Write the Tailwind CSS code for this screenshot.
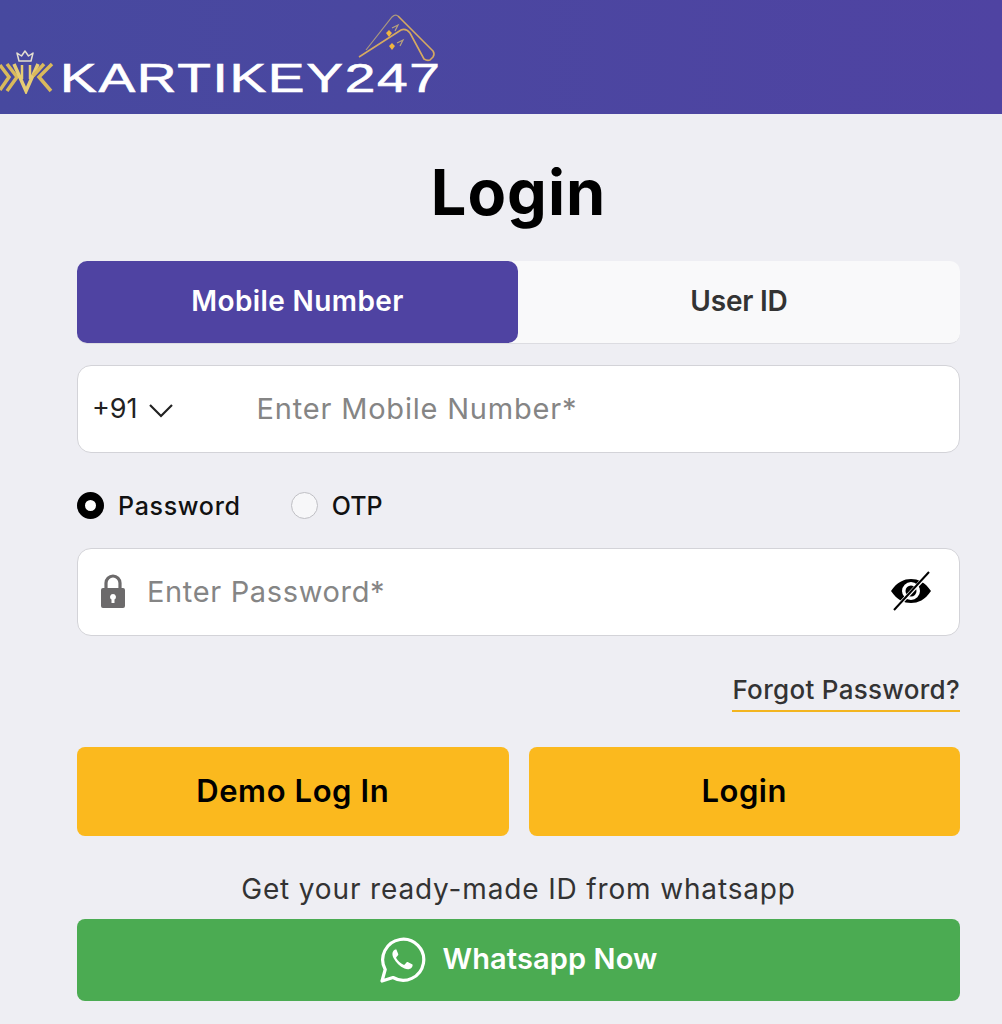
<!DOCTYPE html>
<html lang="en">
<head>
  <meta charset="UTF-8" />
  <meta name="viewport" content="width=device-width, initial-scale=1.0" />
  <title>Login - Kartikey247</title>
  <script src="https://cdn.jsdelivr.net/npm/@tailwindcss/browser@4"></script>
</head>
<body class="bg-[#eeeef3] text-black font-['Inter',sans-serif] overflow-hidden">
  <div class="h-[1024px] flex flex-col">
    <!-- header -->
    <header class="h-[114px] bg-gradient-to-r from-[#47499f] to-[#4f43a2] relative shrink-0">
      <svg class="absolute left-0 top-[50px]" width="56" height="44" viewBox="0 0 56 44" fill="none">
        <path d="M19 11l-2-8 4.500 3L25 1l3.500 5L33 3l-2 8z" stroke="#e4dfd0" stroke-width="1.500" stroke-linejoin="round"/>
        <path d="M0 15l9 12-9 13M7 14l10 13L7 41" stroke="#d9b95c" stroke-width="3.500"/>
        <path d="M14 14l12 27 12-27" stroke="#e6cc74" stroke-width="3.500"/>
        <path d="M22 15v14M30 15v14" stroke="#e6cc74" stroke-width="2.500"/>
        <path d="M52 14L39 27l12 14M44 14L33 26" stroke="#d9b95c" stroke-width="3.500"/>
      </svg>
      <svg class="absolute left-[350px] top-[10px]" width="95" height="60" viewBox="0 0 95 60" fill="none">
        <path d="M16 40L42 7q3-3 6-1" stroke="#a9977f" stroke-width="1.200"/>
        <path d="M48 6l35 35q2 3 0 6l-3 3q-3 1-6-1L60 23q-4-5-9-3L9 47" stroke="#d5a961" stroke-width="1.600" stroke-linejoin="round"/>
        <path d="M36 23l3-3 3 3-3 4zM39 36l3-3 3 3-3 4z" fill="#f0b53e"/>
        <path d="M42 18l6-3-3 6M47 33l6-3-3 6" stroke="#b9a27c" stroke-width="1.200"/>
      </svg>
      <span class="absolute left-[60px] top-[54px] font-['Liberation_Sans',sans-serif] text-[41px] leading-[48px] font-normal text-white [-webkit-text-stroke:0.6px_white] tracking-[1.2px] scale-x-[1.345] origin-left whitespace-nowrap">KARTIKEY247</span>
    </header>

    <main class="flex-1 pl-[77px] pr-[42px] flex flex-col">
      <h1 class="mt-[37px] h-[82px] text-center text-[63px] leading-[82px] font-bold tracking-[1px]">Login</h1>

      <!-- tabs -->
      <div class="mt-[28px] h-[83px] flex rounded-[10px] bg-[#f9f9fa] border-b border-[#dcdce1] text-[28px] font-semibold">
        <div class="w-[441px] pb-[2px] rounded-[10px] bg-[#4f43a2] text-white flex items-center justify-center tracking-[0.4px]">Mobile Number</div>
        <div class="flex-1 pb-[2px] flex items-center justify-center text-[#333] tracking-[-0.2px]">User ID</div>
      </div>

      <!-- mobile -->
      <div class="mt-[21px] h-[88px] flex items-center bg-white rounded-[14px] border border-[#d3d3d8] text-[29px]">
        <span class="ml-[14px] text-[27px] text-[#222]">+91</span>
        <svg class="ml-[10px] mt-[1px]" width="26" height="16" viewBox="0 0 26 16" fill="none"><path d="M2 3l11 11L24 3" stroke="#222" stroke-width="2.200"/></svg>
        <span class="ml-[83px] text-[#858585] tracking-[0.8px]">Enter Mobile Number*</span>
      </div>

      <!-- radios -->
      <div class="mt-[38px] h-[28px] flex items-center text-[25px] font-medium">
        <span class="w-[27px] h-[27px] rounded-full border-[8px] border-black bg-white"></span>
        <span class="ml-[14px] pt-[3px] text-[#111] tracking-[0.7px]">Password</span>
        <span class="ml-[50px] w-[27px] h-[27px] rounded-full border border-[#bfbfc4] bg-[#f7f7f9]"></span>
        <span class="ml-[14px] pt-[3px] text-[#111]">OTP</span>
      </div>

      <!-- password -->
      <div class="mt-[29px] h-[88px] flex items-center bg-white rounded-[14px] border border-[#d3d3d8] text-[29px]">
        <svg class="ml-[22px] mb-[2px]" width="26" height="35" viewBox="0 0 26 35" fill="none">
          <path d="M6 15V9a7 7 0 0 1 14 0v6" stroke="#6c6a6b" stroke-width="3.200"/>
          <path fill-rule="evenodd" clip-rule="evenodd" d="M3 14h20a2 2 0 0 1 2 2v16a2 2 0 0 1-2 2H3a2 2 0 0 1-2-2V16a2 2 0 0 1 2-2zm10 6a3 3 0 0 0-1.500 5.600V29h3v-3.400A3 3 0 0 0 13 20z" fill="#6c6a6b"/>
        </svg>
        <span class="ml-[21px] text-[#858585] tracking-[0.65px]">Enter Password*</span>
        <svg class="ml-auto mr-[27px] mb-[2px]" width="42" height="42" viewBox="0 0 42 42" fill="none">
          <path fill-rule="evenodd" clip-rule="evenodd" d="M1 21C7 12 14 9 21 9s14 3 20 12c-6 9-13 12-20 12S7 30 1 21zm20-9a9 9 0 1 0 0 18 9 9 0 0 0 0-18z" fill="#000"/>
          <circle cx="21" cy="21" r="5.500" fill="#000"/>
          <path d="M5 39L39 3" stroke="#fff" stroke-width="4"/>
          <path d="M4 40L39 2" stroke="#000" stroke-width="2"/>
        </svg>
      </div>

      <!-- forgot -->
      <div class="mt-[40px] flex justify-end">
        <span class="h-[36px] leading-[28px] text-[26px] font-medium text-[#333] border-b-2 border-[#f3b51f] tracking-[0.3px]">Forgot Password?</span>
      </div>

      <!-- buttons -->
      <div class="mt-[35px] flex gap-[20px] text-[31px] font-semibold">
        <div class="flex-1 h-[89px] bg-[#fbb91e] rounded-[8px] flex items-center justify-center tracking-[0.6px]">Demo Log In</div>
        <div class="flex-1 h-[89px] bg-[#fbb91e] rounded-[8px] flex items-center justify-center tracking-[0.5px]">Login</div>
      </div>

      <p class="mt-[36px] h-[34px] leading-[34px] text-center text-[28px] text-[#333] tracking-[0.85px]">Get your ready-made ID from whatsapp</p>

      <!-- whatsapp -->
      <div class="mt-[13px] h-[82px] bg-[#4bab52] rounded-[8px] flex items-center justify-center gap-[17px] text-white text-[29px] font-semibold tracking-[0.1px]">
        <svg width="46" height="46" viewBox="0 0 46 46" fill="none">
          <path d="M2 44l3.200-11.500A20.500 20.500 0 1 1 13 40.500z" stroke="#fff" stroke-width="3.200" stroke-linejoin="round"/>
          <path d="M16.500 12.500c-1-.2-2 0-3 1.200-1.500 1.800-1.500 4.300 0 7.300 2.400 4.700 6.400 8.600 11 10.500 3 1.200 5.500.8 7-.8 1-1.100 1.300-2.400 1-3.300l-4.800-2.400c-.5-.2-1 0-1.300.4l-1.600 2c-.3.400-.8.500-1.300.3-3-1.300-5.500-3.600-7.200-6.500-.3-.5-.2-1 .2-1.300l1.500-1.700c.3-.4.400-.9.200-1.300l-2-4.800c-.1-.3-.4-.6-.7-.6z" fill="#fff"/>
        </svg>
        <span class="pb-[3px]">Whatsapp Now</span>
      </div>
    </main>
  </div>
</body>
</html>
